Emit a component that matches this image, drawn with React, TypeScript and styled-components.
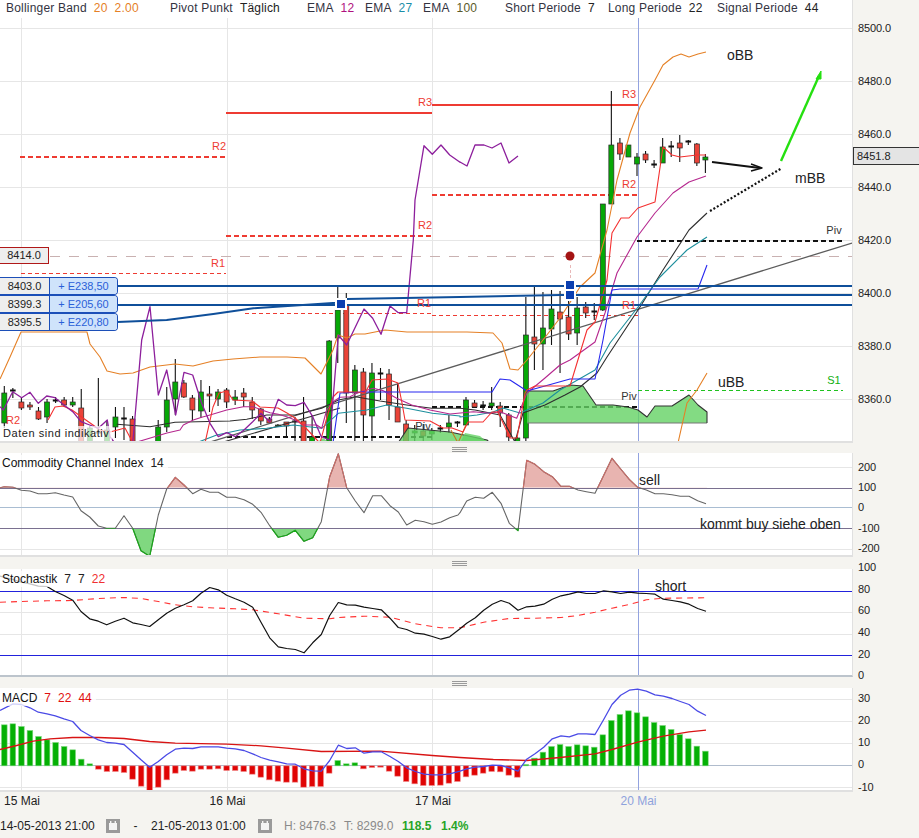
// App.tsx
import React from 'react';
import styled, { createGlobalStyle } from 'styled-components';

const GlobalStyle = createGlobalStyle`
  html, body {
    margin: 0;
    padding: 0;
    background: #f5f4f0;
    font-family: "Liberation Sans", Arial, sans-serif;
    font-size: 12px;
    color: #222;
    overflow: hidden;
  }
`;

const PLOT_WIDTH = 853;
const VERTICALS = [21.5, 227, 432];
const NOW_X = 638.5;

const Page = styled.div`
  width: 919px;
  height: 838px;
  display: flex;
  flex-direction: column;
  overflow: hidden;
`;

const PaneRow = styled.div<{ $height: number }>`
  display: flex;
  height: ${(p) => p.$height}px;
  flex: none;
`;

const PriceRow = styled(PaneRow)`
  position: relative;
`;

const Plot = styled.div<{ $bottom?: string }>`
  position: relative;
  flex: none;
  width: ${PLOT_WIDTH}px;
  box-sizing: border-box;
  background: #fff;
  border-right: 1px solid #e0e0e0;
  border-bottom: 2px solid ${(p) => p.$bottom || '#e0e0e0'};
  overflow: hidden;

  svg {
    display: block;
  }
`;

const Axis = styled.div<{ $offset: number }>`
  flex: 1;
  padding-left: 5px;
  margin-top: ${(p) => p.$offset}px;
  font-size: 11px;
  letter-spacing: -0.1px;
`;

const Tick = styled.div<{ $step: number }>`
  height: ${(p) => p.$step}px;
  line-height: ${(p) => p.$step}px;
  white-space: nowrap;
`;

const Handle = styled.div<{ $height: number }>`
  flex: none;
  height: ${(p) => p.$height}px;
  display: flex;
  justify-content: center;
  padding-top: 4px;
  box-sizing: border-box;
`;

const Grip = styled.div`
  width: 15px;
  height: 1px;
  background: #9a9a9a;
  box-shadow: 0 2px 0 #9a9a9a, 0 4px 0 #9a9a9a;
`;

const Legend = styled.div`
  position: absolute;
  top: 0;
  left: 6px;
  display: flex;
  height: 16px;
  line-height: 16px;
  color: #33333f;
  letter-spacing: 0.2px;
  white-space: nowrap;
`;

const LegendGroup = styled.div<{ $width: number }>`
  width: ${(p) => p.$width}px;
  flex: none;
`;

const PaneTitle = styled.div`
  position: absolute;
  top: 2px;
  left: 0;
  padding: 0 4px 0 2px;
  line-height: 16px;
  color: #111;
  background: rgba(255, 255, 255, 0.75);
  white-space: nowrap;
`;

const Value = styled.span<{ $color?: string }>`
  margin-left: 7px;
  color: ${(p) => p.$color || '#222'};
`;

const Disclaimer = styled.div`
  position: absolute;
  left: 0;
  bottom: 0;
  padding: 0 3px;
  height: 15px;
  line-height: 15px;
  font-size: 11px;
  letter-spacing: 0.55px;
  background: rgba(255, 255, 255, 0.72);
`;

const AlertTag = styled.div`
  position: absolute;
  left: 0;
  top: 247px;
  width: 49px;
  height: 17px;
  box-sizing: border-box;
  border: 1px solid #b01818;
  border-left: none;
  background: #eeeeee;
  font-size: 11px;
  line-height: 15px;
  text-align: center;
`;

const OrderStack = styled.div`
  position: absolute;
  left: 0;
  top: 277px;
  display: flex;
  flex-direction: column;
`;

const OrderRow = styled.div`
  display: flex;
  width: 118px;
  height: 18px;
  box-sizing: border-box;
  border: 1px solid #1c4fb8;
  border-left: none;
  border-radius: 0 4px 4px 0;
  overflow: hidden;
  font-size: 11px;
  line-height: 16px;
`;

const OrderLevel = styled.div`
  width: 49px;
  background: #eeeeee;
  border-right: 1px solid #1c4fb8;
  text-align: center;
`;

const OrderProfit = styled.div`
  flex: 1;
  background: #cfe3fb;
  color: #2a5fd8;
  text-align: center;
`;

const PriceTag = styled.div`
  position: absolute;
  left: 853px;
  top: 147px;
  width: 66px;
  height: 18px;
  box-sizing: border-box;
  border: 1px solid #333;
  border-right: none;
  background: #e4e4e4;
  padding-left: 3px;
  font-size: 11px;
  line-height: 16px;
`;

const DateRow = styled.div`
  flex: none;
  display: flex;
  height: 19px;
  padding-left: 4px;
  line-height: 19px;
  box-sizing: border-box;
`;

const DateLabel = styled.div<{ $now?: boolean }>`
  width: 205.5px;
  flex: none;
  color: ${(p) => (p.$now ? '#8ea2dc' : '#222')};
`;

const Footer = styled.div`
  flex: none;
  display: flex;
  align-items: center;
  height: 27px;
  padding-top: 3px;
  box-sizing: border-box;
  white-space: nowrap;
`;

const Stamp = styled.span<{ $width: number }>`
  width: ${(p) => p.$width}px;
  flex: none;
`;

const Dash = styled(Stamp)`
  text-align: center;
`;

const Stat = styled.span<{ $width: number; $green?: boolean }>`
  width: ${(p) => p.$width}px;
  flex: none;
  color: ${(p) => (p.$green ? '#28a428' : '#8a8a8a')};
  font-weight: ${(p) => (p.$green ? 'bold' : 'normal')};
`;

const GridLine = styled.line<{ $color?: string; $weight?: number; $dash?: string }>`
  stroke: ${(p) => p.$color || '#e6e6e6'};
  stroke-width: ${(p) => p.$weight || 1};
  stroke-dasharray: ${(p) => p.$dash || 'none'};
  shape-rendering: crispEdges;
`;

const Series = styled.polyline<{ $color: string; $weight?: number; $dash?: string }>`
  fill: none;
  stroke: ${(p) => p.$color};
  stroke-width: ${(p) => p.$weight || 1.1};
  stroke-dasharray: ${(p) => p.$dash || 'none'};
  stroke-linejoin: round;
`;

const Area = styled.polygon<{ $fill: string; $stroke?: string }>`
  fill: ${(p) => p.$fill};
  stroke: ${(p) => p.$stroke || 'none'};
  stroke-width: 1;
`;

const Note = styled.text<{ $size?: number; $color?: string; $anchor?: string }>`
  font-family: "Liberation Sans", Arial, sans-serif;
  font-size: ${(p) => p.$size || 14}px;
  fill: ${(p) => p.$color || '#222'};
  text-anchor: ${(p) => p.$anchor || 'start'};
`;

const Wick = styled.line`
  stroke: #111;
  stroke-width: 1.1;
`;

const Doji = styled(Wick)`
  stroke-width: 2;
`;

const Body = styled.rect<{ $up: boolean }>`
  fill: ${(p) => (p.$up ? '#06a806' : '#ea4338')};
  stroke: #2b2b2b;
  stroke-width: 0.7;
`;

const Bar = styled.rect<{ $up: boolean }>`
  fill: ${(p) => (p.$up ? '#04b004' : '#e00404')};
  stroke: ${(p) => (p.$up ? '#7cd87c' : '#f08a8a')};
  stroke-width: 0.6;
`;

const Marker = styled.rect`
  fill: #0b3fb0;
  stroke: #fff;
  stroke-width: 2;
`;

// readings were taken from a 3x enlargement, so each series keeps the crop origin
const zoomed = (ox: number, oy: number, v: number[]) => {
  const out: string[] = [];
  for (let i = 0; i < v.length; i += 2) out.push(`${(ox + v[i] / 3).toFixed(1)},${(oy + v[i + 1] / 3).toFixed(1)}`);
  return out.join(' ');
};

const candleX = (i: number) => 4.3 + 8.55 * i;

// index, high, low, body top, body bottom, kind
type Candle = [number, number, number, number, number, 'g' | 'r' | 'd'];
const CANDLES: Candle[] = [
  [0, 386, 428, 393, 423, 'g'], [1, 388, 398, 390, 392, 'd'], [2, 398, 410, 402, 408, 'r'], [3, 402, 410, 405, 407, 'r'],
  [4, 407, 420, 411, 419, 'r'], [5, 399, 423, 402, 417, 'g'], [6, 397, 403, 400, 401, 'd'], [7, 397, 407, 400, 405, 'r'],
  [8, 397, 407, 402, 405, 'g'], [9, 389, 450, 408, 450, 'r'], [10, 426, 450, 428, 450, 'g'], [11, 378, 433, 432, 433, 'd'],
  [12, 420, 450, 430, 450, 'g'], [13, 407, 438, 417, 427, 'g'], [14, 407, 440, 418, 419, 'd'], [15, 416, 450, 419, 450, 'r'],
  [18, 420, 450, 427, 450, 'g'], [19, 387, 432, 400, 427, 'g'], [20, 359, 415, 382, 399, 'g'], [21, 380, 398, 383, 397, 'r'],
  [22, 395, 421, 398, 410, 'r'], [23, 380, 418, 392, 411, 'g'], [24, 386, 412, 394, 396, 'r'], [25, 389, 406, 392, 399, 'g'],
  [26, 388, 408, 390, 402, 'r'], [27, 390, 405, 397, 400, 'g'], [28, 388, 407, 393, 397, 'r'], [29, 397, 419, 402, 410, 'r'],
  [30, 408, 425, 409, 421, 'r'], [31, 417, 424, 419, 423, 'r'], [32, 424, 427, 425, 426, 'g'], [33, 422, 437, 422, 426, 'r'],
  [34, 417, 450, 421, 422, 'd'], [35, 397, 450, 421, 450, 'r'], [36, 415, 450, 437, 450, 'g'], [38, 340, 450, 341, 450, 'g'],
  [39, 287, 363, 310, 338, 'g'], [40, 293, 423, 305, 393, 'r'], [41, 365, 442, 370, 393, 'g'], [42, 368, 450, 372, 415, 'r'],
  [43, 363, 450, 373, 416, 'g'], [44, 368, 400, 373, 375, 'd'], [45, 369, 420, 374, 405, 'r'], [46, 383, 422, 407, 422, 'r'],
  [47, 420, 450, 424, 450, 'r'], [48, 425, 445, 431, 433, 'g'], [49, 424, 443, 431, 436, 'r'], [50, 428, 440, 431, 434, 'g'],
  [51, 425, 433, 428, 429, 'd'], [52, 415, 433, 423, 427, 'g'], [53, 421, 427, 422, 423, 'd'], [54, 397, 425, 400, 425, 'g'],
  [55, 400, 408, 403, 407, 'r'], [56, 401, 410, 405, 406, 'd'], [57, 387, 410, 403, 406, 'g'], [58, 402, 427, 406, 413, 'r'],
  [59, 413, 442, 415, 437, 'r'], [60, 437, 450, 438, 450, 'g'], [61, 297, 441, 335, 438, 'g'], [62, 287, 370, 337, 344, 'r'],
  [63, 292, 370, 328, 344, 'g'], [64, 290, 345, 309, 329, 'g'], [65, 291, 373, 312, 319, 'r'], [66, 293, 340, 317, 334, 'r'],
  [67, 297, 345, 308, 333, 'g'], [68, 302, 318, 307, 313, 'r'], [69, 303, 320, 311, 313, 'd'], [70, 204, 311, 204, 310, 'g'],
  [71, 91, 204, 145, 204, 'g'], [72, 138, 160, 143, 154, 'r'], [73, 145, 157, 145, 157, 'g'], [74, 153, 176, 157, 164, 'g'],
  [75, 151, 163, 154, 160, 'r'], [76, 160, 168, 164, 166, 'd'], [77, 138, 163, 147, 163, 'g'], [78, 141, 157, 146, 148, 'd'],
  [79, 135, 162, 143, 148, 'r'], [80, 140, 145, 141, 143, 'd'], [81, 143, 166, 144, 163, 'r'], [82, 154, 173, 157, 160, 'g'],
];

const BOLL_UP = '0,379 10,357 21,332 87,332 90,344 100,357 107,371 120,374 133,373 150,367 175,364 193,366 213,361 233,359 260,357 287,357 305,358 321,374 333,350 338,335 347,338 355,334 365,334 385,330 407,332 433,332 467,332 493,333 502,343 510,369 518,370 527,360 543,340 560,318 580,287 595,273 607,230 617,180 630,133 640,107 655,80 663,65 673,57 681,54 689,57 698,54 706,52';
const BOLL_LOW = '451,430 458,443 466,425';
const BOLL_LOW_2 = '678,443 687,403 697,390 707,373';

const EMA_FAST = zoomed(0, 240, [0, 500, 10, 510, 38, 455, 65, 473, 90, 457, 115, 490, 140, 468, 165, 473, 192, 495, 218, 515, 243, 545, 269, 555, 295, 565, 322, 540, 330, 590, 345, 610, 398, 610, 425, 300, 450, 200, 475, 465, 500, 390, 527, 525, 552, 397, 578, 405, 605, 490, 630, 550, 655, 590, 680, 578, 706, 590, 732, 570, 758, 545, 783, 520, 809, 545, 835, 478, 860, 495, 886, 497, 912, 487, 938, 530, 964, 590, 989, 600, 1015, 285, 1040, 315, 1092, 207, 1118, 235, 1143, 283, 1170, 198, 1195, 218, 1220, 218, 1240, 0, 1245, -120, 1272, -283, 1297, -257, 1323, -285, 1349, -255, 1380, -233])
  + ' 460,162 467,166 475,145 484,145 492,148 501,143 509,163 518,156';

const EMA_MAGENTA = '137,442 167,433 180,430 ' + zoomed(170, 360, [40, 195, 70, 180, 95, 172, 120, 165, 170, 150, 220, 140, 250, 140, 275, 150, 300, 158, 325, 163, 350, 170, 375, 180, 400, 195, 440, 195, 455, 205, 470, 150, 490, 125, 510, 112, 540, 110])
  + ' ' + zoomed(340, 360, [50, 100, 100, 85, 130, 92, 170, 115, 215, 135, 270, 150, 330, 162, 400, 155, 450, 160, 480, 155, 530, 175])
  + ' 527,393 545,378 560,365 570,360 595,342 605,313 617,273 637,237 655,213 673,193 689,182 706,176';

const EMA_RED = '48,420 55,407 63,406 72,410 83,418 93,425 100,430 110,432 125,428 133,443 205,443 213,407 219,393 227,391 233,400 252,401 260,407 278,408 287,413 295,418 303,425 317,440 320,443 327,417 333,397 338,392 357,392 365,393 372,380 387,379 398,383 402,403 405,420 430,421 443,428 452,428 463,432 468,422 483,422 492,412 498,412 510,438 517,438 525,393 527,390 535,386 570,386 587,330 595,322 607,280 612,233 621,218 629,218 638,208 655,202 663,147 672,155 680,157 697,155 706,155';

const MID_BLACK = zoomed(0, 240, [350, 553, 450, 560, 525, 547, 690, 543, 740, 538, 800, 525, 885, 525, 965, 505, 1015, 480, 1066, 470, 1140, 483, 1220, 495, 1295, 505, 1380, 505])
  + ' 475,410 500,415 515,442 523,413 545,405 565,395 580,387 597,373 607,357 640,307 663,270 689,230 707,213';

const EMA_TEAL = zoomed(0, 240, [590, 608, 650, 585, 720, 570, 800, 565, 880, 555, 965, 565, 1015, 520, 1100, 510, 1160, 495, 1220, 505, 1297, 520, 1380, 528])
  + ' 460,417 477,415 493,412 503,408 520,413 543,403 560,390 595,370 610,343 638,307 660,277 687,250 707,237';

const BLUE_LINE = '333,443 340,393 363,392 492,392 500,379 510,380 527,391 570,379 595,379 603,340 612,290 620,289 698,289 707,265';

const CLOUD = '527,423 527,391 553,391 570,385 583,386 596,405 613,405 628,407 638,410 647,417 655,406 672,406 689,395 698,405 707,412 707,423';

const CURVE = zoomed(0, 240, [352, 246, 500, 240, 640, 222, 760, 205, 1010, 188]) + ' 347,299 460,297 560,295 852,295';

const CCI_LEFT = [0, 128, 13, 125, 39, 127, 64, 136, 90, 138, 115, 146, 141, 146, 166, 143, 192, 150, 218, 156, 243, 197, 269, 216, 295, 243, 320, 250, 346, 250, 372, 212, 398, 250, 423, 317, 449, 334, 475, 210, 500, 132, 526, 97, 552, 120, 578, 146, 603, 133, 629, 142, 655, 142, 680, 157, 706, 157, 732, 164, 758, 178, 783, 202, 809, 242, 835, 277, 860, 271, 886, 256, 912, 289, 938, 278, 964, 230, 989, 95, 1015, 26, 1040, 128, 1066, 168, 1092, 203, 1118, 152, 1144, 152, 1170, 182, 1195, 201, 1220, 240, 1246, 226, 1272, 230, 1297, 238, 1323, 231, 1349, 218, 1374, 210];
const CCI_RIGHT = [0, 203, 20, 168, 46, 157, 71, 160, 97, 142, 123, 175, 148, 235, 174, 257, 200, 46, 225, 58, 251, 80, 277, 95, 303, 124, 328, 124, 354, 135, 379, 140, 405, 145, 456, 40, 482, 72, 508, 103, 533, 127, 559, 135, 585, 146, 610, 146, 636, 149, 661, 154, 687, 154, 713, 167, 738, 176];
const CCI = zoomed(0, 445, CCI_LEFT) + ' ' + zoomed(460, 445, CCI_RIGHT);

const STOCH = zoomed(0, 445, [0, 392, 39, 402, 64, 410, 90, 415, 115, 422, 141, 423, 166, 438, 192, 450, 218, 464, 243, 498, 269, 520, 295, 527, 320, 538, 346, 527, 372, 518, 398, 532, 423, 537, 449, 543, 475, 523, 500, 503, 526, 488, 552, 478, 578, 466, 603, 443, 629, 426, 655, 433, 680, 449, 706, 460, 732, 470, 758, 485, 783, 530, 809, 577, 835, 604, 860, 609, 886, 612, 912, 622, 938, 592, 964, 567, 989, 510, 1015, 471, 1040, 478, 1066, 479, 1092, 485, 1118, 489, 1144, 493, 1170, 518, 1195, 546, 1220, 552, 1246, 563, 1272, 566, 1297, 573, 1323, 581, 1349, 574])
  + ' ' + zoomed(460, 445, [0, 550, 20, 533, 46, 517, 71, 494, 97, 476, 123, 465, 148, 473, 174, 494, 200, 484, 225, 482, 251, 476, 277, 461, 303, 451, 328, 446, 354, 439, 379, 444, 405, 444, 431, 436, 456, 439, 482, 444, 508, 440, 533, 443, 559, 444, 585, 446, 610, 461, 636, 465, 661, 469, 687, 476, 713, 489, 738, 497]);

const STOCH_SIGNAL = zoomed(0, 445, [0, 470, 64, 468, 141, 466, 218, 465, 295, 459, 372, 456, 423, 459, 475, 468, 526, 478, 578, 484, 629, 487, 706, 490, 758, 493, 835, 505, 912, 518, 989, 520, 1015, 516, 1092, 512, 1170, 515, 1246, 535, 1323, 547])
  + ' ' + zoomed(460, 445, [0, 547, 71, 530, 148, 519, 225, 518, 303, 516, 354, 510, 405, 500, 456, 488, 508, 477, 559, 463, 610, 458, 738, 457]);

const MACD_LINE = zoomed(0, 680, [0, 90, 39, 70, 64, 72, 90, 82, 115, 95, 141, 100, 166, 106, 192, 115, 218, 123, 243, 150, 269, 165, 295, 178, 320, 186, 346, 188, 372, 192, 398, 215, 423, 238, 449, 260, 475, 243, 500, 223, 526, 206, 552, 203, 578, 204, 603, 199, 629, 199, 655, 199, 680, 203, 706, 205, 732, 210, 758, 220, 783, 231, 809, 239, 835, 244, 860, 250, 886, 251, 912, 265, 938, 271, 964, 272, 989, 240, 1015, 194, 1040, 204, 1066, 202, 1092, 218, 1118, 214, 1144, 214, 1170, 228, 1195, 243, 1220, 262, 1246, 273, 1272, 281, 1297, 283, 1323, 283, 1349, 280])
  + ' ' + zoomed(460, 680, [0, 272, 20, 265, 46, 260, 71, 258, 97, 254, 123, 255, 148, 262, 174, 272, 200, 236, 225, 220, 251, 200, 277, 175, 303, 166, 328, 169, 354, 160, 379, 160, 405, 162, 431, 117, 456, 72, 482, 44, 508, 29, 533, 26, 559, 32, 585, 43, 610, 47, 636, 54, 661, 63, 687, 72, 713, 92, 738, 105]);

const MACD_SIGNAL = zoomed(0, 680, [0, 207, 50, 195, 100, 182, 150, 175, 218, 171, 295, 171, 372, 174, 449, 183, 526, 188, 680, 191, 783, 196, 860, 203, 964, 213, 1140, 212, 1297, 225])
  + ' ' + zoomed(460, 680, [0, 231, 100, 237, 200, 240, 300, 231, 405, 220, 456, 207, 533, 185, 610, 167, 687, 154, 738, 149]);

const MACD_ZERO = 256;
const MACD_BARS = [133, 130, 138, 150, 168, 178, 186, 198, 208, 236, 250, 266, 273, 273, 276, 296, 317, 336, 320, 298, 278, 270, 272, 266, 266, 265, 270, 270, 273, 281, 290, 298, 302, 305, 305, 320, 318, 318, 278, 240, 250, 247, 265, 261, 260, 272, 287, 303, 310, 315, 315, 314, 308, 303, 289, 284, 278, 273, 274, 284, 290, 252, 233, 215, 198, 192, 198, 193, 196, 200, 163, 120, 102, 91, 97, 109, 126, 135, 147, 162, 175, 197, 212];

const CHART_WIDTH = PLOT_WIDTH - 1;

const PRICE_TICKS = ['8500.0', '8480.0', '8460.0', '8440.0', '8420.0', '8400.0', '8380.0', '8360.0'];
const PRICE_GRID = [28, 81, 134, 187, 240, 293, 346, 399];

const PIVOT_LABELS: [string, number, number][] = [
  ['R2', 219, 150], ['R3', 425, 106], ['R2', 425, 229], ['R1', 218, 267], ['R1', 424, 307],
  ['R3', 629, 98], ['R2', 629, 188], ['R1', 629, 309], ['R2', 13, 424],
];

const Verticals: React.FC<{ top: number; bottom: number }> = ({ top, bottom }) => (
  <>
    {VERTICALS.map((x) => (
      <GridLine key={x} x1={x} x2={x} y1={top} y2={bottom} />
    ))}
  </>
);

const NowLine: React.FC<{ top: number; bottom: number }> = ({ top, bottom }) => (
  <GridLine x1={NOW_X} x2={NOW_X} y1={top} y2={bottom} $color="#93a3e0" />
);

const Horizontals: React.FC<{ ys: number[] }> = ({ ys }) => (
  <>
    {ys.map((y) => (
      <GridLine key={y} x1={0} x2={CHART_WIDTH} y1={y} y2={y} />
    ))}
  </>
);

const CandleMark: React.FC<{ c: Candle }> = ({ c }) => {
  const [i, high, low, top, bottom, kind] = c;
  const x = candleX(i);
  return (
    <g>
      <Wick x1={x} x2={x} y1={high} y2={low} />
      {kind === 'd' ? (
        <Doji x1={x - 2.8} x2={x + 2.8} y1={top + 0.5} y2={top + 0.5} />
      ) : (
        <Body x={x - 2.5} y={top} width={5} height={bottom - top} $up={kind === 'g'} />
      )}
    </g>
  );
};

const PriceChart = () => (
  <svg width={CHART_WIDTH} height={441} viewBox="0 0 852 441">
    <Horizontals ys={PRICE_GRID} />
    <Verticals top={18} bottom={441} />
    <NowLine top={18} bottom={441} />

    <GridLine x1={20} x2={226} y1={157} y2={157} $color="#ee3b32" $weight={2} $dash="5 3" />
    <GridLine x1={226} x2={432} y1={113} y2={113} $color="#ee3b32" $weight={2} />
    <GridLine x1={432} x2={638} y1={105} y2={105} $color="#ee3b32" $weight={2} />
    <GridLine x1={226} x2={432} y1={236} y2={236} $color="#ee3b32" $weight={2} $dash="5 3" />
    <GridLine x1={432} x2={638} y1={195} y2={195} $color="#ee3b32" $weight={2} $dash="5 3" />
    <GridLine x1={21} x2={226} y1={273} y2={273} $color="#ee3b32" $dash="4 3" />
    <GridLine x1={245} x2={432} y1={313} y2={313} $color="#ee3b32" $dash="4 3" />
    <GridLine x1={432} x2={638} y1={315} y2={315} $color="#ee3b32" $dash="4 3" />
    <GridLine x1={227} x2={432} y1={437} y2={437} $color="#111" $weight={2} $dash="5 3" />
    <GridLine x1={432} x2={637} y1={407} y2={407} $color="#111" $weight={2} $dash="5 3" />
    <GridLine x1={637} x2={843} y1={241} y2={241} $color="#111" $weight={2} $dash="5 3" />
    <GridLine x1={638} x2={843} y1={390} y2={390} $color="#1fc21f" $dash="4 3" />
    <GridLine x1={50} x2={852} y1={256} y2={256} $color="#c9b1b1" $dash="10 9" />

    {CANDLES.map((c) => (
      <CandleMark key={c[0]} c={c} />
    ))}

    <Area points={CLOUD} $fill="rgba(100, 210, 100, 0.8)" />
    <Series points="527,423 707,423" $color="#777" />
    <Series points="527,391 553,391 570,385 583,386 596,405 613,405 628,407 638,410 647,417 655,406 672,406 689,395 698,405 707,412 707,423" $color="#333" />
    <Area points="398,443 408,428 450,432 487,440 490,443" $fill="rgba(100, 210, 100, 0.8)" />
    <Series points="398,443 408,428 450,432 487,440 490,443" $color="#333" />
    <Area points="460,443 465,433 480,436 488,443" $fill="rgba(100, 210, 100, 0.8)" />
    <Area points="316,443 323,438 330,443" $fill="rgba(100, 210, 100, 0.8)" />

    <Series points="207,443 852,243" $color="#5c5c5c" $weight={1.3} />
    <Series points="220,443 340,408" $color="#333" />
    <Series points={BOLL_UP} $color="#e58026" />
    <Series points={BOLL_LOW} $color="#c07a20" />
    <Series points={BOLL_LOW_2} $color="#e58026" />
    <Series points={MID_BLACK} $color="#2d2d2d" />
    <Series points={EMA_TEAL} $color="#1d8f9d" />
    <Series points={EMA_MAGENTA} $color="#b5278e" />
    <Series points={BLUE_LINE} $color="#2727ef" />
    <Series points={EMA_RED} $color="#f43030" />
    <Series points={EMA_FAST} $color="#8d1f9c" $weight={1.3} />

    <GridLine x1={118} x2={852} y1={286} y2={286} $color="#0f4f9a" $weight={2} />
    <GridLine x1={118} x2={852} y1={305} y2={305} $color="#0f4f9a" $weight={2} />
    <Series points={CURVE} $color="#0f4f9a" $weight={2} />

    <GridLine x1={570} x2={570} y1={265} y2={278} $color="#e8b8b8" $dash="3 2" />
    <circle cx={570} cy={256} r={4.5} fill="#a41414" />
    <Marker x={336} y={299} width={10} height={10} />
    <Marker x={565} y={280} width={10} height={10} />
    <Marker x={565} y={290} width={10} height={10} />

    {PIVOT_LABELS.map(([label, x, y]) => (
      <Note key={`${label}${x}${y}`} x={x} y={y} $size={11} $color="#ee3b32" $anchor="middle">
        {label}
      </Note>
    ))}
    <Note x={834} y={234} $size={11} $color="#333" $anchor="middle">Piv</Note>
    <Note x={629} y={400} $size={11} $color="#333" $anchor="middle">Piv</Note>
    <Note x={423} y={430} $size={11} $color="#333" $anchor="middle">Piv</Note>
    <Note x={834} y={384} $size={11} $color="#10b010" $anchor="middle">S1</Note>

    <Note x={727} y={60}>oBB</Note>
    <Note x={795} y={183}>mBB</Note>
    <Note x={718} y={387}>uBB</Note>

    <Series points="712,162 760,168" $color="#111" $weight={2} />
    <Series points="751,164 762,168 751,171" $color="#111" $weight={1.4} />
    <Series points="710,211 782,168" $color="#111" $weight={2.2} $dash="2 2" />
    <Series points="781,161 819,76" $color="#25e010" $weight={2.4} />
    <Area points="821,71 816,79 821,79" $fill="#25e010" $stroke="#25e010" />
  </svg>
);

const CciChart = () => (
  <svg width={CHART_WIDTH} height={102.5} viewBox="0 453 852 102.5">
    <defs>
      <clipPath id="cci-high">
        <rect x={0} y={440} width={852} height={47.7} />
      </clipPath>
      <clipPath id="cci-low">
        <rect x={0} y={528.3} width={852} height={40} />
      </clipPath>
    </defs>
    <Horizontals ys={[467, 549]} />
    <Verticals top={453} bottom={556} />
    <NowLine top={453} bottom={556} />
    <GridLine x1={0} x2={CHART_WIDTH} y1={507} y2={507} $color="#a9bdd2" />
    <Area clipPath="url(#cci-high)" points={`0,487.7 ${CCI} 707,487.7`} $fill="#e8b4b0" />
    <Area clipPath="url(#cci-low)" points={`0,528.3 ${CCI} 707,528.3`} $fill="#80d880" />
    <GridLine x1={0} x2={CHART_WIDTH} y1={488} y2={488} $color="#7a7090" />
    <GridLine x1={0} x2={CHART_WIDTH} y1={528} y2={528} $color="#7a7090" />
    <Series points={CCI} $color="#666" />
    <Series clipPath="url(#cci-high)" points={CCI} $color="#cd6d68" />
    <Series clipPath="url(#cci-low)" points={CCI} $color="#14ad14" />
    <Note x={639} y={485}>sell</Note>
    <Note x={700} y={529}>kommt buy siehe oben</Note>
  </svg>
);

const StochChart = () => (
  <svg width={CHART_WIDTH} height={106} viewBox="0 568.5 852 106">
    <Horizontals ys={[612, 634]} />
    <Verticals top={568} bottom={676} />
    <NowLine top={568} bottom={676} />
    <GridLine x1={0} x2={CHART_WIDTH} y1={591} y2={591} $color="#2222dc" />
    <GridLine x1={0} x2={CHART_WIDTH} y1={655} y2={655} $color="#2222dc" />
    <Series points={STOCH_SIGNAL} $color="#f33" $dash="6 5" />
    <Series points={STOCH} $color="#111" $weight={1.2} />
    <Note x={655} y={590}>short</Note>
  </svg>
);

const MacdChart = () => (
  <svg width={CHART_WIDTH} height={102.5} viewBox="0 687.5 852 102.5">
    <Horizontals ys={[699, 721, 743, 787]} />
    <Verticals top={688} bottom={792} />
    <NowLine top={688} bottom={792} />
    <GridLine x1={0} x2={CHART_WIDTH} y1={765} y2={765} $color="#b0bccd" />
    {MACD_BARS.map((v, i) => {
      const y = 680 + v / 3;
      const zero = 680 + MACD_ZERO / 3;
      const up = v < MACD_ZERO;
      return (
        <Bar key={i} x={candleX(i) - 2.8} y={up ? y : zero} width={5.6} height={Math.abs(y - zero)} $up={up} />
      );
    })}
    <Series points={MACD_SIGNAL} $color="#d81414" $weight={1.3} />
    <Series points={MACD_LINE} $color="#4a4ae6" $weight={1.3} />
  </svg>
);

const CalendarIcon = () => (
  <svg width={14} height={14} viewBox="0 0 14 14">
    <rect width={14} height={14} fill="#9a9a9a" />
    <rect x={3} y={4} width={8} height={7} fill="#f4f4f4" />
    <rect x={4} y={2} width={1.4} height={2.5} fill="#f4f4f4" />
    <rect x={8.6} y={2} width={1.4} height={2.5} fill="#f4f4f4" />
  </svg>
);

const App: React.FC = () => {
  return (
    <Page>
      <GlobalStyle />

      <PriceRow $height={443}>
        <Plot>
          <PriceChart />
          <Legend>
            <LegendGroup $width={164}>
              Bollinger Band<Value $color="#e58026">20</Value>
              <Value $color="#e58026">2.00</Value>
            </LegendGroup>
            <LegendGroup $width={137}>
              Pivot Punkt<Value>Täglich</Value>
            </LegendGroup>
            <LegendGroup $width={58}>
              EMA<Value $color="#b0107e">12</Value>
            </LegendGroup>
            <LegendGroup $width={58}>
              EMA<Value $color="#1a8ea8">27</Value>
            </LegendGroup>
            <LegendGroup $width={82}>
              EMA<Value $color="#5a5a2a">100</Value>
            </LegendGroup>
            <LegendGroup $width={103}>
              Short Periode<Value>7</Value>
            </LegendGroup>
            <LegendGroup $width={109}>
              Long Periode<Value>22</Value>
            </LegendGroup>
            <LegendGroup $width={110}>
              Signal Periode<Value>44</Value>
            </LegendGroup>
          </Legend>
          <AlertTag>8414.0</AlertTag>
          <OrderStack>
            <OrderRow>
              <OrderLevel>8403.0</OrderLevel>
              <OrderProfit>+ E238,50</OrderProfit>
            </OrderRow>
            <OrderRow>
              <OrderLevel>8399.3</OrderLevel>
              <OrderProfit>+ E205,60</OrderProfit>
            </OrderRow>
            <OrderRow>
              <OrderLevel>8395.5</OrderLevel>
              <OrderProfit>+ E220,80</OrderProfit>
            </OrderRow>
          </OrderStack>
          <Disclaimer>Daten sind indikativ</Disclaimer>
        </Plot>
        <Axis $offset={1.5}>
          {PRICE_TICKS.map((t) => (
            <Tick key={t} $step={53}>{t}</Tick>
          ))}
        </Axis>
        <PriceTag>8451.8</PriceTag>
      </PriceRow>

      <Handle $height={10}><Grip /></Handle>

      <PaneRow $height={104}>
        <Plot>
          <CciChart />
          <PaneTitle>
            Commodity Channel Index<Value>14</Value>
          </PaneTitle>
        </Plot>
        <Axis $offset={4}>
          {['200', '100', '0', '-100', '-200'].map((t) => (
            <Tick key={t} $step={20.2}>{t}</Tick>
          ))}
        </Axis>
      </PaneRow>

      <Handle $height={11.5}><Grip /></Handle>

      <PaneRow $height={108}>
        <Plot $bottom="#bcc4cc">
          <StochChart />
          <PaneTitle>
            Stochastik<Value>7</Value><Value>7</Value><Value $color="#f03030">22</Value>
          </PaneTitle>
        </Plot>
        <Axis $offset={-11.3}>
          {['100', '80', '60', '40', '20', '0'].map((t) => (
            <Tick key={t} $step={21.6}>{t}</Tick>
          ))}
        </Axis>
      </PaneRow>

      <Handle $height={11}><Grip /></Handle>

      <PaneRow $height={104.5}>
        <Plot>
          <MacdChart />
          <PaneTitle>
            MACD<Value $color="#e01010">7</Value><Value $color="#e01010">22</Value><Value $color="#e01010">44</Value>
          </PaneTitle>
        </Plot>
        <Axis $offset={-0.6}>
          {['30', '20', '10', '0', '-10'].map((t) => (
            <Tick key={t} $step={22.2}>{t}</Tick>
          ))}
        </Axis>
      </PaneRow>

      <DateRow>
        <DateLabel>15 Mai</DateLabel>
        <DateLabel>16 Mai</DateLabel>
        <DateLabel>17 Mai</DateLabel>
        <DateLabel $now>20 Mai</DateLabel>
      </DateRow>

      <Footer>
        <Stamp $width={106}>14-05-2013 21:00</Stamp>
        <CalendarIcon />
        <Dash $width={31}>-</Dash>
        <Stamp $width={107}>21-05-2013 01:00</Stamp>
        <CalendarIcon />
        <Stamp $width={12} />
        <Stat $width={60}>H: 8476.3</Stat>
        <Stat $width={58}>T: 8299.0</Stat>
        <Stat $width={39} $green>118.5</Stat>
        <Stat $width={40} $green>1.4%</Stat>
      </Footer>
    </Page>
  );
};

export default App;
